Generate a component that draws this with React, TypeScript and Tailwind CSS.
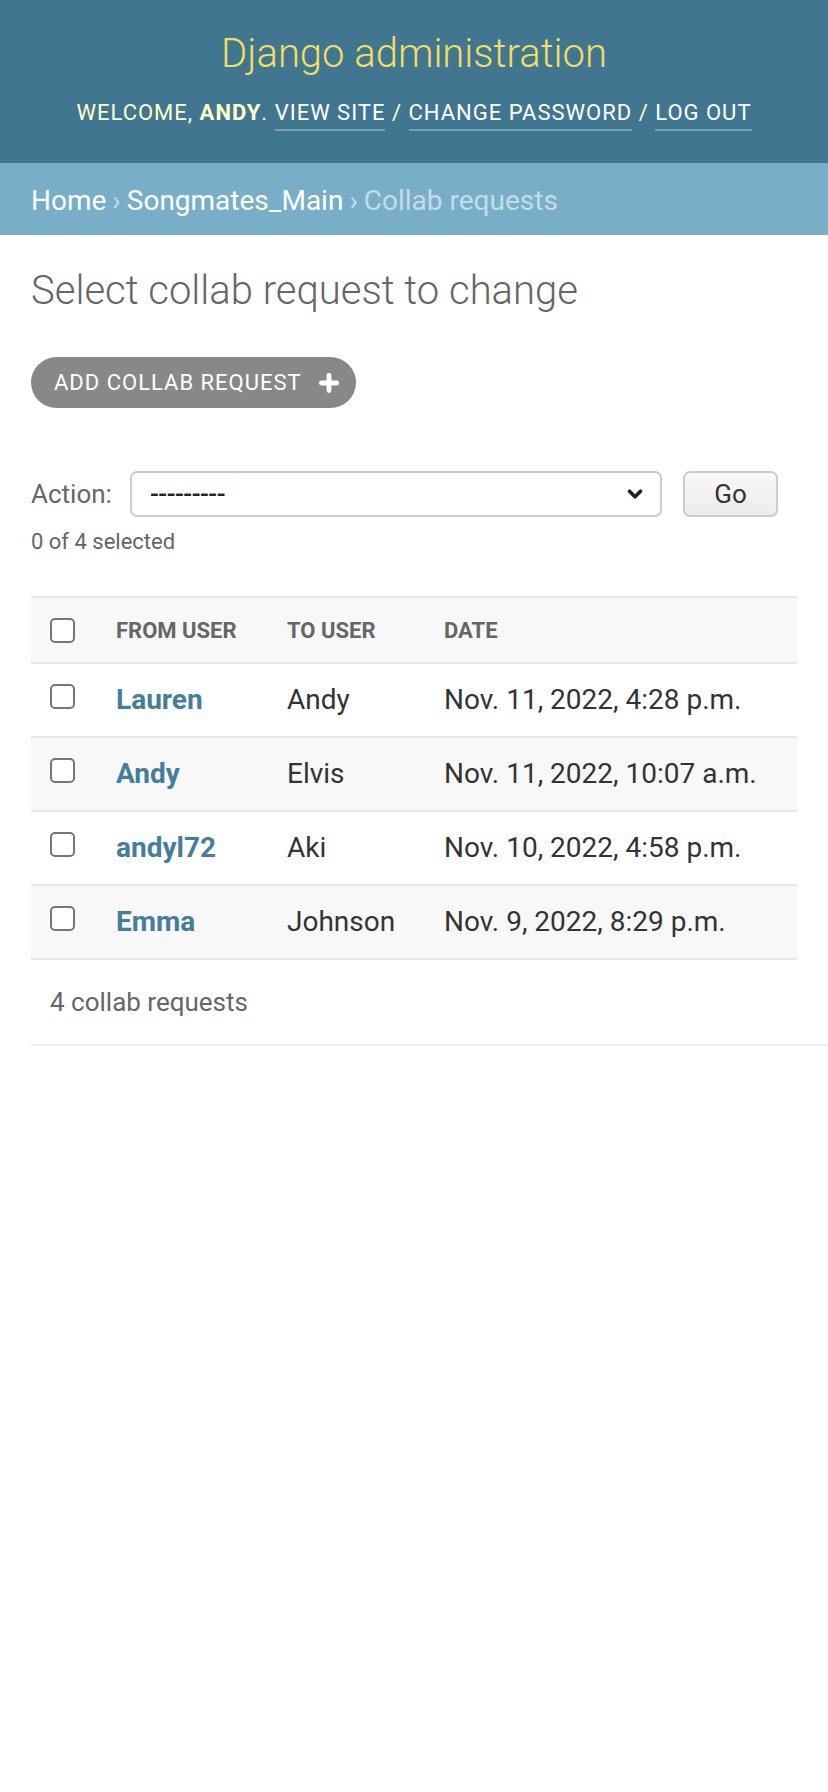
import { Plus, ChevronDown } from "lucide-react";

const rows = [
  { from: "Lauren", to: "Andy", date: "Nov. 11, 2022, 4:28 p.m." },
  { from: "Andy", to: "Elvis", date: "Nov. 11, 2022, 10:07 a.m." },
  { from: "andyl72", to: "Aki", date: "Nov. 10, 2022, 4:58 p.m." },
  { from: "Emma", to: "Johnson", date: "Nov. 9, 2022, 8:29 p.m." },
];

const Box = () => (
  <div className="h-[25px] w-[25px] rounded-[5px] border-2 border-[#767676] bg-white" />
);

export default function App() {
  return (
    <div className="min-h-[1792px] bg-white font-['Roboto',sans-serif] text-[#333]">
      <header className="flex h-[163px] flex-col items-center bg-[#417690] pt-[26px]">
        <h1 className="text-[40px] font-light leading-[56px] text-[#f5dd5d]">Django administration</h1>
        <div className="mt-[17px] text-[22px] uppercase leading-[28px] tracking-[1px] text-[#ffc]">
          Welcome, <strong className="font-bold">Andy</strong>.{" "}
          <a className="border-b-2 border-[rgba(255,255,255,0.3)] pb-[4px] text-white">View site</a> /{" "}
          <a className="border-b-2 border-[rgba(255,255,255,0.3)] pb-[4px] text-white">Change password</a> /{" "}
          <a className="border-b-2 border-[rgba(255,255,255,0.3)] pb-[4px] text-white">Log out</a>
        </div>
      </header>

      <nav className="flex h-[72px] items-center bg-[#79aec8] px-[31px] pt-[4px] text-[28px] text-[#c4dce8]">
        <a className="text-white">Home</a>
        <span className="mx-[6px]">›</span>
        <a className="text-white">Songmates_Main</a>
        <span className="mx-[6px]">›</span>
        <span>Collab requests</span>
      </nav>

      <main className="px-[31px]">
        <h1 className="mt-[32px] text-[40px] font-light leading-[48px] text-[#666]">
          Select collab request to change
        </h1>

        <button className="mt-[42px] flex h-[51px] items-center gap-[14px] rounded-full bg-[#888] pl-[23px] pr-[14px] text-[22px] uppercase tracking-[1px] text-white">
          Add collab request
          <Plus className="h-[26px] w-[26px]" strokeWidth={4.5} />
        </button>

        <div className="mt-[63px] flex items-center">
          <span className="w-[99px] text-[26px] text-[#666]">Action:</span>
          <div className="flex h-[46px] w-[532px] items-center justify-between rounded-[7px] border-2 border-[#ccc] pl-[18px] pr-[14px]">
            <span className="text-[26px] font-medium leading-none tracking-[-0.5px] text-[#222]">---------</span>
            <ChevronDown className="h-[22px] w-[22px] text-[#222]" strokeWidth={4} />
          </div>
          <button className="ml-[21px] h-[46px] w-[95px] rounded-[7px] border-2 border-[#ccc] bg-gradient-to-b from-[#f8f8f8] to-[#ececec] text-[26px] text-[#333]">
            Go
          </button>
        </div>
        <p className="mt-[8px] text-[22px] text-[#666]">0 of 4 selected</p>

        <div className="mt-[38px] w-[766px] border-t-2 border-[#e8e8e8]">
          <div className="grid h-[66px] grid-cols-[69px_171px_157px_1fr] items-center border-b-2 border-[#e8e8e8] bg-[#f8f8f8] text-[22px] font-bold uppercase text-[#666]">
            <div className="pl-[19px]"><Box /></div>
            <div className="pl-[16px]">From user</div>
            <div className="pl-[16px]">To user</div>
            <div className="pl-[16px]">Date</div>
          </div>
          {rows.map((r, i) => (
            <div
              key={r.from}
              className={`grid h-[74px] grid-cols-[69px_171px_157px_1fr] items-center border-b-2 border-[#e8e8e8] text-[28px] ${
                i % 2 ? "bg-[#f8f8f8]" : "bg-white"
              }`}
            >
              <div className="-mt-[8px] pl-[19px]"><Box /></div>
              <a className="pl-[16px] font-bold text-[#447e9b]">{r.from}</a>
              <div className="pl-[16px] text-[#333]">{r.to}</div>
              <div className="pl-[16px] text-[#333]">{r.date}</div>
            </div>
          ))}
        </div>

        <div className="-mr-[31px] flex h-[86px] items-center border-b-2 border-[#eee] pl-[19px] text-[26px] text-[#666]">
          4 collab requests
        </div>
      </main>
    </div>
  );
}
